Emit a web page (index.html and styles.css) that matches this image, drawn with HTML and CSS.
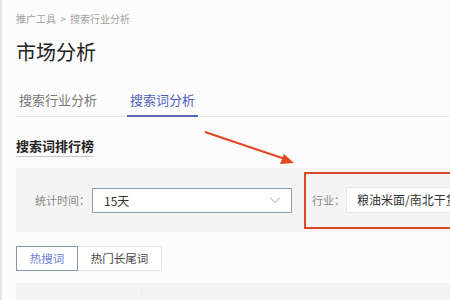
FILE: index.html
```html
<!DOCTYPE html>
<html lang="zh-CN">
<head>
    <meta charset="UTF-8">
    <title>市场分析</title>
    <link rel="stylesheet" href="styles.css">
</head>
<body>
    <div class="page">
        <div class="crumb">推广工具 <span class="sep">&gt;</span> 搜索行业分析</div>
        <h1 class="title">市场分析</h1>

        <div class="tabs">
            <div class="tab">搜索行业分析</div>
            <div class="tab active">搜索词分析</div>
        </div>

        <h2 class="section-title">搜索词排行榜</h2>

        <div class="filter">
            <span class="label">统计时间：</span>
            <div class="select">
                <span>15天</span>
                <svg class="chev" width="12" height="8" viewBox="0 0 12 8"><path d="M1 1.5 L6 6.5 L11 1.5" fill="none" stroke="#a0a0a0" stroke-width="1"/></svg>
            </div>
            <div class="mark">
                <span class="label">行业：</span>
                <div class="input">粮油米面/南北干货</div>
            </div>
        </div>

        <div class="btns">
            <div class="btn on">热搜词</div>
            <div class="btn">热门长尾词</div>
        </div>

        <div class="thead">
            <div class="col first"></div>
            <div class="col"></div>
        </div>
    </div>

    <!-- annotation arrow -->
    <svg class="arrow" width="450" height="300" viewBox="0 0 450 300">
        <line x1="205" y1="132" x2="288" y2="160" stroke="#e0471d" stroke-width="2"/>
        <polygon points="294,163 280,164 284,154" fill="#e0471d"/>
    </svg>
</body>
</html>
```

FILE: styles.css
```css
body { margin: 0; background: #fcfcfc; font-family: "Noto Sans CJK SC", "Noto Sans", sans-serif; overflow: hidden; height: 300px; position: relative; }
.page { border-left: 2px solid #e4e4e4; padding-left: 14px; height: 300px; overflow: hidden; }
.crumb { padding-top: 13px; font-size: 10px; line-height: 12px; color: #a0a0a0; }
.crumb .sep { margin: 0 2px; }
.title { margin: 15px 0 0; font-size: 20px; line-height: 24px; font-weight: normal; color: #222; }

.tabs { display: flex; gap: 27px; margin-top: 21px; border-bottom: 1px solid #e6e6e6; }
.tab { padding: 6px 3px 6px; font-size: 13px; line-height: 18px; color: #777; border-bottom: 2px solid transparent; margin-bottom: -1px; }
.tab.active { color: #4f60c2; border-bottom-color: #5868ba; }

.section-title { display: inline-block; margin: 20px 0 0; padding-bottom: 1px; font-size: 13px; line-height: 18px; color: #222; border-bottom: 1px solid #c8c8c8; }

.filter { display: flex; align-items: center; height: 64px; margin-top: 11px; background: #f4f4f4; padding-left: 19px; overflow: hidden; }
.label { font-size: 11px; color: #888; white-space: nowrap; }
.select { display: flex; align-items: center; justify-content: space-between; box-sizing: border-box; width: 200px; height: 25px; margin-left: 2px; padding: 0 10px 0 11px; background: #fff; border: 1px solid #8e99b6; font-size: 12px; color: #333; flex-shrink: 0; }
.mark { display: flex; align-items: center; box-sizing: border-box; height: 57px; margin-left: 12px; padding-left: 6px; border: 2px solid #d9472a; flex-shrink: 0; width: 200px; }
.input { box-sizing: border-box; width: 160px; height: 26px; margin-left: 1px; padding-left: 10px; line-height: 24px; background: #fff; border: 1px solid #e6e6e6; font-size: 12px; color: #333; white-space: nowrap; flex-shrink: 0; }

.btns { display: flex; margin-top: 14px; }
.btn { box-sizing: border-box; height: 25px; line-height: 23px; font-size: 11.5px; color: #444; background: #fff; border: 1px solid #e2e2e2; text-align: center; }
.btn.on { width: 62px; color: #6b7fd6; border-color: #8692ae; }
.btn:not(.on) { width: 84px; border-left: none; }

.thead { display: flex; margin-top: 12px; height: 40px; background: #f3f3f3; }
.col.first { width: 122px; border-right: 1px solid #fafafa; }

.arrow { position: absolute; left: 0; top: 0; pointer-events: none; }
```
